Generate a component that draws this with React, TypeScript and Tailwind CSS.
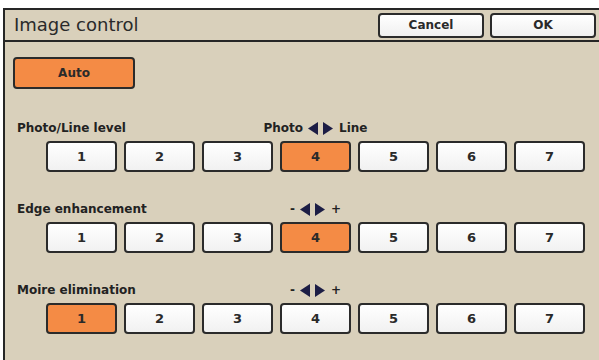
import React from 'react'

const levels = [1, 2, 3, 4, 5, 6, 7]

function Arrows() {
  return (
    <span className="inline-flex items-center gap-[5px] ml-[5px] mr-[6px]">
      <svg width="10" height="13" viewBox="0 0 10 13"><path d="M10 0L0 6.5L10 13Z" fill="#1c1d45" /></svg>
      <svg width="10" height="13" viewBox="0 0 10 13"><path d="M0 0L10 6.5L0 13Z" fill="#1c1d45" /></svg>
    </span>
  )
}

function LevelRow({ label, left, right, selected, gapTop }: { label: string; left: string; right: string; selected: number; gapTop: string }) {
  return (
    <div className={`pl-[41px] ${gapTop}`}>
      {/* label line */}
      <div className="grid grid-cols-[repeat(7,71px)] gap-x-[7px] h-4 items-center">
        <div className="row-start-1 col-start-1 -ml-[29px] whitespace-nowrap text-[12px] font-bold text-[#222]">{label}</div>
        <div className="row-start-1 col-start-4 justify-self-center w-max flex items-center text-[12px] font-bold text-[#222]">
          {left}
          <Arrows />
          {right}
        </div>
      </div>
      {/* buttons */}
      <div className="grid grid-cols-[repeat(7,71px)] gap-x-[7px] mt-[6px]">
        {levels.map(n => (
          <div
            key={n}
            className={
              n === selected
                ? 'h-[31px] rounded-[4px] border-2 border-[#2b2b2b] bg-[#f48b45] flex items-center justify-center text-[13px] font-bold text-[#2a2a2a]'
                : 'h-[31px] rounded-[4px] border-2 border-[#2b2b2b] bg-gradient-to-b from-white to-[#f1f1f1] flex items-center justify-center text-[13px] font-bold text-[#2a2a2a]'
            }
          >
            {n}
          </div>
        ))}
      </div>
    </div>
  )
}

export default function App() {
  return (
    <div className="w-[599px] h-[360px] bg-white pl-[3px] pt-[8px] overflow-hidden" style={{ fontFamily: '"DejaVu Sans", Verdana, sans-serif' }}>
      <div className="h-full bg-[#d9d0bb] border-l-2 border-t-2 border-[#262626]">
        {/* Header */}
        <div className="h-[32px] border-b-2 border-[#262626] flex items-center justify-between pl-[9px] pr-[3px]">
          <span className="text-[18px] text-[#2a2a2a] leading-none">Image control</span>
          <div className="flex gap-[6px]">
            <button className="w-[106px] h-[25px] rounded-[4px] border-2 border-[#2b2b2b] bg-gradient-to-b from-white to-[#f0f0f0] text-[12px] font-bold text-[#2a2a2a]">Cancel</button>
            <button className="w-[106px] h-[25px] rounded-[4px] border-2 border-[#2b2b2b] bg-gradient-to-b from-white to-[#f0f0f0] text-[12px] font-bold text-[#2a2a2a]">OK</button>
          </div>
        </div>

        {/* Auto */}
        <div className="pl-[8px] mt-[15px]">
          <button className="w-[122px] h-[32px] rounded-[4px] border-2 border-[#2b2b2b] bg-[#f48b45] text-[12px] font-bold text-[#2a2a2a]">Auto</button>
        </div>

        <LevelRow label="Photo/Line level" left="Photo" right="Line" selected={4} gapTop="mt-[30px]" />
        <LevelRow label="Edge enhancement" left="-" right="+" selected={4} gapTop="mt-[28px]" />
        <LevelRow label="Moire elimination" left="-" right="+" selected={1} gapTop="mt-[28px]" />
      </div>
    </div>
  )
}
